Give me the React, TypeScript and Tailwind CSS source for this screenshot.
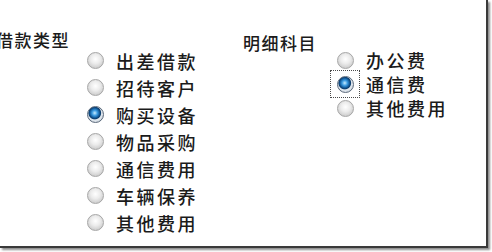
import React from 'react';

const cjk = 'font-["Microsoft_YaHei","Noto_Sans_CJK_SC",sans-serif]';

function Radio({ checked }: { checked?: boolean }) {
  return checked ? (
    <span className="w-[17px] h-[17px] rounded-full border border-[#5a687a] bg-[radial-gradient(circle_at_45%_40%,#c8ecff_0%,#3a9ae0_22%,#0d4f8c_42%,#0f3f6e_48%,#e2e8ee_56%,#c2ccd6_100%)] shrink-0" />
  ) : (
    <span className="w-[17px] h-[17px] rounded-full border border-[#a6a6a6] bg-[radial-gradient(circle_at_50%_40%,#ffffff_0%,#ececec_40%,#cfcfcf_75%,#e4e4e4_100%)] shrink-0" />
  );
}

function Option({ label, checked, focus }: { label: string; checked?: boolean; focus?: boolean }) {
  return (
    <div className="flex items-center h-full">
      <span
        className={
          focus
            ? 'w-[28px] h-[26px] -ml-[6px] shrink-0 flex items-center justify-center outline-1 outline-dotted outline-[#4a4a4a]'
            : 'w-[17px] h-[24px] shrink-0 flex items-center justify-center'
        }
      >
        <Radio checked={checked} />
      </span>
      <span
        className={
          focus
            ? 'ml-[7px] text-[18px] tracking-[2.5px] leading-none whitespace-nowrap text-[#1b1b1b] font-medium'
            : 'ml-[12px] text-[18px] tracking-[2.5px] leading-none whitespace-nowrap text-[#1b1b1b] font-medium'
        }
      >
        {label}
      </span>
    </div>
  );
}

export default function App() {
  const left = ['出差借款', '招待客户', '购买设备', '物品采购', '通信费用', '车辆保养', '其他费用'];
  const right = ['办公费', '通信费', '其他费用'];
  return (
    <div className={`w-[492px] h-[252px] bg-white overflow-hidden ${cjk}`}>
      <div className="w-[488px] h-[248px] bg-white border-r-2 border-b-2 border-[#3a3a3a] shadow-[2px_2px_2px_rgba(0,0,0,0.45)] flex overflow-hidden">
        {/* 借款类型 */}
        <div className="w-[91px] shrink-0 -ml-[4px] pt-[31px] text-[17px] tracking-[1.5px] leading-none whitespace-nowrap text-[#1b1b1b] font-medium">
          借款类型
        </div>
        <div className="w-[150px] shrink-0 pt-[47px] flex flex-col">
          {left.map((l, i) => (
            <div key={l} className="h-[27px]">
              <Option label={l} checked={i === 2} />
            </div>
          ))}
        </div>

        {/* 明细科目 */}
        <div className="w-[100px] shrink-0 pl-[6px] pt-[34px] text-[17px] tracking-[1.5px] leading-none whitespace-nowrap text-[#1b1b1b] font-medium">
          明细科目
        </div>
        <div className="pt-[48px] flex flex-col">
          {right.map((l, i) => (
            <div key={l} className="h-[24px]">
              <Option label={l} checked={i === 1} focus={i === 1} />
            </div>
          ))}
        </div>
      </div>
    </div>
  );
}
